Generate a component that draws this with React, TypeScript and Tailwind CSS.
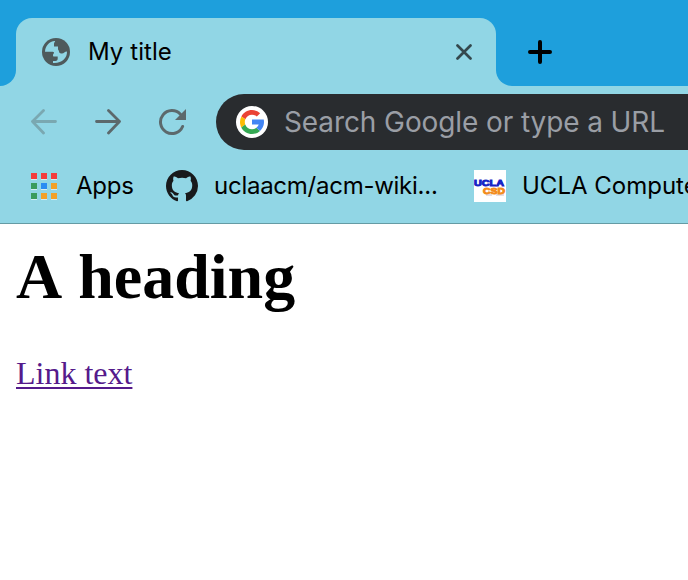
import type { ReactNode } from 'react';

function Globe() {
  return (
    <svg width="28" height="28" viewBox="0 0 28 28" className="shrink-0">
      <circle cx="14" cy="14" r="14" fill="#4e5a5c" />
      <path
        fill="#91d6e5"
        d="M3 13.7C3.200 8 7 3.500 13 3C13.600 3.600 12 4.500 12 5.700V8.500H16V11C16 12 17 12.500 17 13.500C17 15 18.500 15.500 20 15.500C22 15.500 22.500 13.500 25 13.500C25.300 20 20 25.500 11 24.900V23H13.500C15 23 15.700 22 15.700 20.500V18.500H12C11.200 18.500 11 18 11 17C11 15.800 12 15.800 12 14.800C12 13.900 11 13.700 10 13.700Z"
      />
    </svg>
  );
}

function GoogleMark() {
  return (
    <span className="flex size-8 shrink-0 items-center justify-center rounded-full bg-white">
      <svg width="24" height="24" viewBox="4 4 40 40">
        <path fill="#ea4335" d="M6.300 14.700L12.900 19.500C14.700 15.100 19 12 24 12C27.100 12 29.800 13.200 32 15L37.600 9.400C34 6.100 29.300 4 24 4C16.300 4 9.700 8.300 6.300 14.700Z" />
        <path fill="#fbbc05" d="M6.300 14.700C4.800 17.500 4 20.600 4 24C4 27.300 4.800 30.400 6.200 33.100L12.700 28.100C12.200 26.800 12 25.400 12 24C12 22.400 12.300 20.900 12.900 19.500Z" />
        <path fill="#34a853" d="M24 44C29.200 44 33.900 42 37.400 38.800L31.200 33.600C29.200 35.100 26.700 36 24 36C18.800 36 14.400 32.700 12.700 28.100L6.200 33.100C9.500 39.600 16.200 44 24 44Z" />
        <path fill="#4285f4" d="M43.600 20H24V28H35.300C34.500 30.200 33.100 32.200 31.200 33.600L37.400 38.800C37 39.200 44 34 44 24C44 22.700 43.900 21.300 43.600 20Z" />
      </svg>
    </span>
  );
}

const appColors = ['#f43b3b', '#f43b3b', '#f43b3b', '#3a9b5c', '#2a8cf2', '#f2a027', '#3a9b5c', '#f2a027', '#f2a027'];

function AppsGrid() {
  return (
    <svg width="27" height="27" viewBox="0 0 27 27" className="shrink-0">
      {appColors.map((color, i) => (
        <g key={i} transform={`translate(${(i % 3) * 10} ${Math.floor(i / 3) * 10})`}>
          <rect width="6" height="7" fill="#d3edf2" />
          <rect width="6" height="6" fill={color} />
        </g>
      ))}
    </svg>
  );
}

function GitHubMark() {
  return (
    <svg width="32" height="32" viewBox="0 0 16 16" fill="#181a1c" className="shrink-0">
      <path d="M8 0C3.580 0 0 3.580 0 8c0 3.540 2.290 6.530 5.470 7.590.4.070.55-.17.55-.38 0-.19-.01-.82-.01-1.490-2.010.37-2.530-.49-2.690-.94-.09-.23-.48-.94-.82-1.130-.28-.15-.68-.52-.01-.53.63-.01 1.080.58 1.230.82.72 1.210 1.870.87 2.330.66.07-.52.28-.87.51-1.070-1.780-.2-3.640-.89-3.640-3.950 0-.87.31-1.590.82-2.150-.08-.2-.36-1.020.08-2.120 0 0 .67-.21 2.200.82.64-.18 1.320-.27 2-.27s1.360.09 2 .27c1.530-1.040 2.200-.82 2.200-.82.44 1.100.16 1.920.08 2.120.51.56.82 1.270.82 2.150 0 3.070-1.870 3.750-3.650 3.950.29.25.54.73.54 1.480 0 1.070-.01 1.930-.01 2.200 0 .21.15.46.55.38A8.010 8.010 0 0 0 16 8c0-4.420-3.580-8-8-8Z" />
    </svg>
  );
}

function UclaMark() {
  return (
    <svg width="32" height="32" viewBox="0 0 32 32" className="shrink-0 bg-white font-['Liberation_Sans'] font-bold">
      <rect x="12" y="24" width="6" height="2" fill="#e4dfe4" />
      <rect x="22" y="24" width="8" height="2" fill="#e4dfe4" />
      <text x="0" y="15.500" fontSize="9.500" textLength="30" lengthAdjust="spacingAndGlyphs" fill="#1724c4" stroke="#1724c4" strokeWidth="1">UCLA</text>
      <text x="9" y="24" fontSize="9.500" textLength="22" lengthAdjust="spacingAndGlyphs" fill="#f28c1c" stroke="#f28c1c" strokeWidth="1">CSD</text>
    </svg>
  );
}

function Label({ children, className }: { children: ReactNode; className: string }) {
  return <span className={`shrink-0 whitespace-nowrap text-2xl ${className}`}>{children}</span>;
}

export default function App() {
  return (
    <div className="h-[580px] w-[688px] overflow-hidden bg-white font-['Inter',sans-serif] text-black">
      <header className="h-56 border-b border-[#659ba4] bg-[#91d6e5]">
        <div className="flex h-[86px] bg-[#91d6e5]">
          <div className="h-[86px] w-4 shrink-0 rounded-br-2xl bg-[#1e9fdc]" />
          <div className="w-[480px] shrink-0 bg-[#1e9fdc] pt-[18px]">
            <div className="flex h-[68px] items-center rounded-t-2xl bg-[#91d6e5] pl-[26px] pr-6">
              <Globe />
              <Label className="ml-[18px] tracking-[0.06px]">My title</Label>
              <svg width="16" height="16" viewBox="0 0 16 16" className="ml-auto" stroke="#34484d" strokeWidth="2.700" strokeLinecap="round">
                <path d="M1.500 1.500L14.500 14.500M14.500 1.500L1.500 14.500" />
              </svg>
            </div>
          </div>
          <div className="flex h-[86px] flex-1 items-center rounded-bl-2xl bg-[#1e9fdc] pl-8 pt-[18px]">
            <svg width="24" height="24" viewBox="0 0 24 24" stroke="#000" strokeWidth="4" strokeLinecap="round">
              <path d="M2 12H22M12 2V22" />
            </svg>
          </div>
        </div>
        <div className="flex h-[72px] items-center pl-[30px]">
          <svg width="28" height="26" viewBox="0 0 28 26" className="shrink-0" fill="none" stroke="#7aa8b1" strokeWidth="2.800" strokeLinecap="round" strokeLinejoin="round">
            <path d="M25.500 12.500H2.500M13.500 1.500L2.500 12.500L13.500 24" />
          </svg>
          <svg width="28" height="26" viewBox="0 0 28 26" className="ml-9 shrink-0" fill="none" stroke="#5c696c" strokeWidth="2.800" strokeLinecap="round" strokeLinejoin="round">
            <path d="M2.500 12.500H25.500M14.500 1.500L25.500 12.500L14.500 24" />
          </svg>
          <svg width="28" height="28" viewBox="0 0 28 28" className="ml-9 shrink-0">
            <path d="M24.600 18.500A11.500 11.500 0 1 1 22.400 6.200" fill="none" stroke="#5c696c" strokeWidth="3" strokeLinecap="round" />
            <path d="M28 1V12H17Z" fill="#5c696c" />
          </svg>
          <div className="ml-[30px] flex h-14 flex-1 items-center rounded-l-full bg-[#292c2f] pl-5">
            <GoogleMark />
            <span className="ml-4 whitespace-nowrap text-[28px] tracking-[-0.1px] text-[#9a9ea5]">Search Google or type a URL</span>
          </div>
        </div>
        <div className="flex h-14 items-center overflow-hidden pl-[31px]">
          <AppsGrid />
          <Label className="ml-[18px] w-[90px] tracking-[-0.2px]">Apps</Label>
          <GitHubMark />
          <Label className="ml-4 w-[260px] tracking-[-0.26px]">uclaacm/acm-wiki...</Label>
          <UclaMark />
          <Label className="ml-4">UCLA Computer</Label>
        </div>
      </header>
      <main className="px-4 pt-[17px] font-['Liberation_Serif',serif]">
        <h1 className="text-[64px] font-bold leading-[72px] [font-kerning:none]">A heading</h1>
        <a className="mt-[42px] block w-fit text-[32px] leading-9 text-[#551a8b] underline decoration-2 underline-offset-[3px]">Link text</a>
      </main>
    </div>
  );
}
